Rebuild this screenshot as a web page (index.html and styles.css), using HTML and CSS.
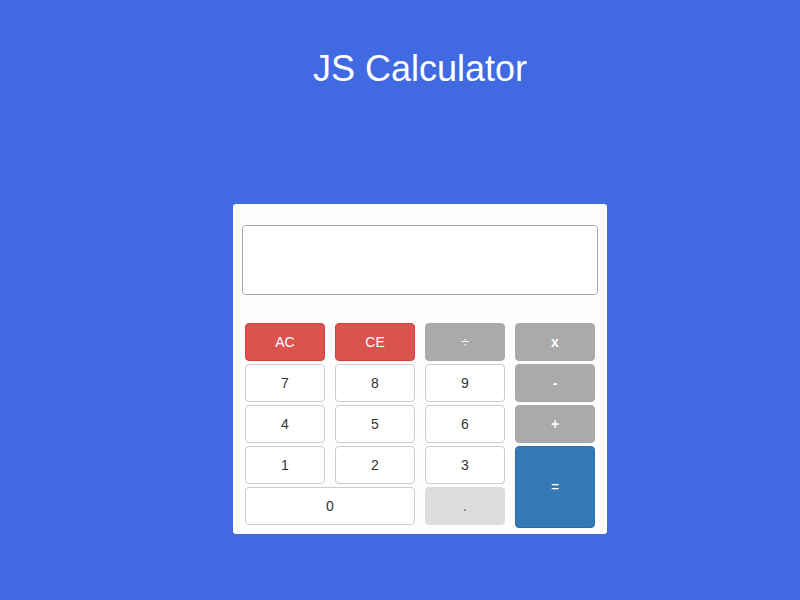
FILE: index.html
```html
<!DOCTYPE html>
<html>
<head>
<meta charset="utf-8">
<link rel="stylesheet" href="styles.css">
</head>
<body>
<div class="page">
  <h1 class="title">JS Calculator</h1>
  <div class="calc">
    <div class="display"></div>
    <div class="keys">
      <button class="key danger">AC</button>
      <button class="key danger">CE</button>
      <button class="key op">÷</button>
      <button class="key op bold">x</button>
      <button class="key">7</button>
      <button class="key">8</button>
      <button class="key">9</button>
      <button class="key op bold">-</button>
      <button class="key">4</button>
      <button class="key">5</button>
      <button class="key">6</button>
      <button class="key op bold">+</button>
      <button class="key">1</button>
      <button class="key">2</button>
      <button class="key">3</button>
      <button class="key primary equals">=</button>
      <button class="key zero">0</button>
      <button class="key dot">.</button>
    </div>
  </div>
</div>
</body>
</html>
```
FILE: styles.css
```css
html, body {
  margin: 0;
  padding: 0;
  background: #4169e1;
  font-family: "Liberation Sans", Arial, sans-serif;
}
.page {
  display: flex;
  flex-direction: column;
  align-items: center;
  padding-left: 40px;
  padding-top: 49px;
}
.title {
  margin: 0;
  font-size: 36px;
  font-weight: 400;
  line-height: 39.6px;
  color: #fff;
}
.calc {
  margin-top: 115px;
  width: 374px;
  box-sizing: border-box;
  background: #fdfdfd;
  border-radius: 3px;
  padding: 21px 9px 9px 9px;
}
.display {
  height: 70px;
  box-sizing: border-box;
  border: 1px solid #aaa;
  border-radius: 4px;
  background: #fff;
}
.keys {
  margin: 28px 3px 0 3px;
  display: grid;
  grid-template-columns: repeat(4, 80px);
  grid-template-rows: repeat(5, 38px);
  column-gap: 10px;
  row-gap: 3px;
}
.key {
  margin: 0;
  padding: 0;
  box-sizing: border-box;
  font-family: "Liberation Sans", Arial, sans-serif;
  font-size: 14px;
  color: #333;
  background: #fff;
  border: 1px solid #ccc;
  border-radius: 4px;
  height: 38px;
}
.danger {
  background: #d9534f;
  border-color: #d43f3a;
  color: #fff;
}
.op {
  background: #aaa;
  border-color: #aaa;
  color: #fff;
}
.bold {
  font-weight: 700;
}
.primary {
  background: #337ab7;
  border-color: #2e6da4;
  color: #fff;
}
.equals {
  grid-column: 4;
  grid-row: 4 / span 2;
  height: 82px;
  align-self: start;
}
.zero {
  grid-column: 1 / span 2;
}
.dot {
  background: #ddd;
  border-color: #ddd;
  color: #555;
}
```
